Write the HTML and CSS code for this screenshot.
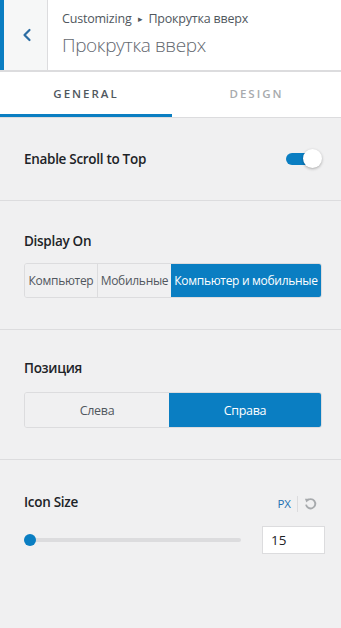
FILE: index.html
```html
<!DOCTYPE html>
<html lang="ru">
<head>
<meta charset="utf-8">
<title>Прокрутка вверх</title>
<link rel="stylesheet" href="styles.css">
</head>
<body>
<div class="panel">
  <header class="head">
    <button class="back" aria-label="Назад">
      <svg width="12" height="14" viewBox="0 0 12 14"><path d="M8.5 2 L3.5 7 L8.5 12" fill="none" stroke="#2c6da3" stroke-width="2.2" stroke-linecap="round" stroke-linejoin="round"/></svg>
    </button>
    <div class="titles">
      <div class="crumb">Customizing <span class="tri">▸</span> Прокрутка вверх</div>
      <div class="title">Прокрутка вверх</div>
    </div>
  </header>
  <nav class="tabs">
    <div class="tab active">GENERAL</div>
    <div class="tab">DESIGN</div>
  </nav>
  <section class="sec sec-toggle">
    <div class="row">
      <span class="label">Enable Scroll to Top</span>
      <span class="toggle"><span class="knob"></span></span>
    </div>
  </section>
  <section class="sec">
    <div class="label">Display On</div>
    <div class="seg seg3">
      <span class="opt">Компьютер</span>
      <span class="opt">Мобильные</span>
      <span class="opt on">Компьютер и мобильные</span>
    </div>
  </section>
  <section class="sec sec-pos">
    <div class="label">Позиция</div>
    <div class="seg seg2">
      <span class="opt">Слева</span>
      <span class="opt on">Справа</span>
    </div>
  </section>
  <section class="sec sec-last">
    <div class="row row-top">
      <span class="label">Icon Size</span>
      <span class="units">
        <span class="px">PX</span>
        <span class="sep"></span>
        <svg class="reset" width="13" height="13" viewBox="0 0 14 14"><path d="M3.2 4.2 A5 5 0 1 1 2.2 8.2" fill="none" stroke="#a7aaad" stroke-width="2"/><path d="M1 1.8 L5.6 2 L2.6 5.9 Z" fill="#a7aaad"/></svg>
      </span>
    </div>
    <div class="row slider-row">
      <div class="track"><span class="thumb"></span></div>
      <div class="num">15</div>
    </div>
  </section>
</div>
</body>
</html>
```
FILE: styles.css
```css
html, body {
  margin: 0;
  padding: 0;
}
body {
  background: #f0f0f1;
  font-family: "Open Sans", "Noto Sans", sans-serif;
  color: #1d2327;
  width: 341px;
  height: 628px;
  overflow: hidden;
}
.panel {
  width: 341px;
}
.head {
  display: flex;
  height: 70px;
  background: #fff;
  border-bottom: 1px solid #dcdcde;
}
.back {
  width: 48px;
  height: 70px;
  padding: 0;
  margin: 0;
  border: 0;
  border-left: 4px solid #0a7ec2;
  border-right: 1px solid #dcdcde;
  background: #f6f7f7;
  display: flex;
  align-items: center;
  justify-content: center;
  box-sizing: border-box;
  padding-left: 2px;
}
.titles {
  padding: 9px 0 0 14px;
}
.crumb {
  font-size: 12.5px;
  line-height: 20px;
  color: #50575e;
  letter-spacing: -0.2px;
}
.tri {
  font-size: 9px;
  margin: 0 3px;
  position: relative;
  top: -1px;
}
.title {
  font-size: 19px;
  font-weight: 300;
  line-height: 28px;
  color: #646970;
  letter-spacing: -0.4px;
  margin-top: 1px;
}
.tabs {
  display: flex;
  background: #fff;
  height: 45px;
  border-top: 1px solid #dcdcde;
  border-bottom: 1px solid #dcdcde;
}
.tab {
  flex: 1;
  display: flex;
  align-items: center;
  justify-content: center;
  font-size: 11.5px;
  font-weight: 600;
  letter-spacing: 2px;
  color: #a7aaad;
  box-sizing: border-box;
  padding-bottom: 2px;
}
.tab.active {
  flex: 0 0 172px;
  color: #50575e;
  border-bottom: 3px solid #0a7ec2;
  padding-bottom: 0;
}
.sec {
  padding: 30px 20px 31px 24px;
  border-bottom: 1px solid #dcdcde;
}
.sec-toggle {
  padding-top: 31px;
  padding-bottom: 31px;
}
.sec-pos {
  padding-top: 28px;
}
.sec-last {
  border-bottom: 0;
  padding-top: 32px;
  padding-right: 16px;
}
.row {
  display: flex;
  align-items: center;
  justify-content: space-between;
}
.label {
  font-size: 13.5px;
  font-weight: 600;
  line-height: 20px;
  color: #1d2327;
  letter-spacing: -0.3px;
}
.toggle {
  position: relative;
  width: 36px;
  height: 20px;
  margin-right: -1px;
}
.toggle::before {
  content: "";
  position: absolute;
  left: 0;
  top: 4px;
  width: 28px;
  height: 12px;
  border-radius: 6px;
  background: #0a7ec2;
}
.knob {
  position: absolute;
  right: 0;
  top: 0;
  width: 19px;
  height: 19px;
  border-radius: 50%;
  background: #fff;
  box-shadow: 0 1px 3px rgba(0,0,0,0.3);
}
.seg {
  display: flex;
  margin-top: 12px;
  height: 35px;
  border-radius: 3px;
  overflow: hidden;
  border: 1px solid #dcdcde;
  box-sizing: border-box;
  margin-right: -1px;
}
.seg2 {
  margin-top: 14px;
  height: 36px;
}
.opt {
  display: flex;
  align-items: center;
  justify-content: center;
  font-size: 12px;
  color: #50575e;
  background: #f0f0f1;
  letter-spacing: -0.3px;
  white-space: nowrap;
}
.seg3 .opt:nth-child(1) { width: 72px; border-right: 1px solid #dcdcde; }
.seg3 .opt:nth-child(2) { width: 73px; }
.seg3 .opt:nth-child(3) { flex: 1; }
.seg2 .opt { flex: 1; font-size: 12.5px; }
.seg2 .opt:first-child { flex: 0 0 144px; }
.opt.on {
  background: #0a7ec2;
  color: #fff;
}
.units {
  display: flex;
  align-items: center;
  gap: 6px;
  margin-right: 8px;
  margin-top: 3px;
}
.px {
  font-size: 11.5px;
  color: #2271b1;
}
.sep {
  width: 1px;
  height: 16px;
  background: #dcdcde;
}
.reset {
  display: block;
}
.slider-row {
  margin-top: 14px;
}
.track {
  position: relative;
  width: 217px;
  height: 4px;
  border-radius: 2px;
  background: #dcdcde;
}
.thumb {
  position: absolute;
  left: 0;
  top: -4px;
  width: 12px;
  height: 12px;
  border-radius: 50%;
  background: #0a7ec2;
}
.num {
  width: 63px;
  height: 28px;
  box-sizing: border-box;
  border: 1px solid #dcdcde;
  background: #fff;
  font-size: 13.5px;
  line-height: 26px;
  padding-left: 8px;
  color: #1d2327;
}
```
